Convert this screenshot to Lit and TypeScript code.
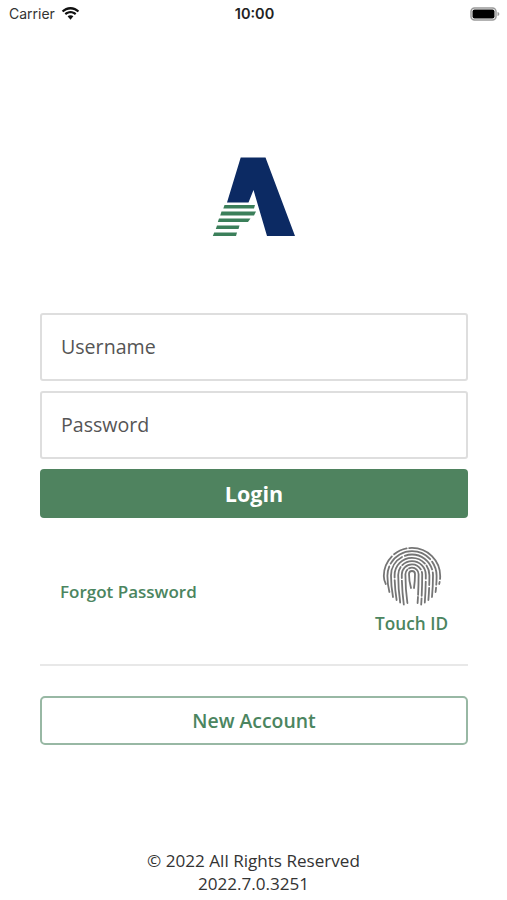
import { LitElement, css, html, svg } from "lit";
import { customElement } from "lit/decorators.js";

// nested ridges of the fingerprint: [half width, top y, bottom y, dash pattern]
const ridges: [number, number, number, string][] = [
  [3, 24, 41, ""],
  [6.600, 20.700, 56, "34 2"],
  [10.200, 17.400, 57.500, "24 2.500 30 2.500"],
  [13.800, 14.100, 55.500, "36 2.500 36 3"],
  [17.400, 10.800, 53, "20 2.500 44 2.500 20 3"],
  [21, 7.500, 50, "44 3 34 3"],
  [24.600, 4.200, 45, "26 3 46 3 24 3"],
  [28.200, 0.900, 37, "30 3 14 2.500 50 3"],
];

@customElement("app-root")
export class AppRoot extends LitElement {
  static styles = css`
    :host {
      display: flex;
      flex-direction: column;
      width: 507px;
      height: 900px;
      background: #fff;
      font-family: "Open Sans", sans-serif;
      color: #4b8560;
    }
    .status {
      display: grid;
      grid-template-columns: 1fr auto 1fr;
      align-items: center;
      height: 27px;
      padding: 0 6px 0 9px;
      font-family: "Inter", "Liberation Sans", sans-serif;
      font-size: 14px;
      color: #333;
    }
    .carrier {
      display: flex;
      align-items: center;
      gap: 6px;
    }
    .time {
      font-weight: 600;
      font-size: 14.500px;
      color: #222;
      margin-left: -1px;
    }
    .battery {
      justify-self: end;
      display: block;
    }
    .logo {
      display: block;
      margin: 130px auto 0;
    }
    .form {
      display: flex;
      flex-direction: column;
      margin: 76px 39px 0 40px;
    }
    .field {
      box-sizing: border-box;
      height: 68px;
      display: flex;
      align-items: center;
      padding: 0 0 1px 19px;
      border: 2px solid #dedede;
      border-radius: 3px;
      font-size: 19.600px;
      color: #555;
      margin-bottom: 10px;
    }
    .login {
      height: 49px;
      display: flex;
      align-items: center;
      justify-content: center;
      border-radius: 4px;
      background: #4f835f;
      color: #fff;
      font-size: 21.500px;
      font-weight: 700;
    }
    .links {
      display: flex;
      justify-content: space-between;
      align-items: center;
      height: 148px;
      padding: 0 20px;
      box-sizing: border-box;
      border-bottom: 2px solid #e8e8e8;
      font-size: 17px;
      font-weight: 600;
    }
    .touch {
      display: flex;
      flex-direction: column;
      align-items: center;
      gap: 5px;
      font-size: 17.200px;
    }
    .touch svg {
      display: block;
    }
    .new-account {
      box-sizing: border-box;
      height: 49px;
      margin-top: 30px;
      display: flex;
      align-items: center;
      justify-content: center;
      border: 2px solid #98b8a4;
      border-radius: 5px;
      font-size: 19.400px;
      font-weight: 600;
    }
    .footer {
      margin-top: 104px;
      text-align: center;
      font-size: 17.100px;
      line-height: 23px;
      color: #333;
    }
  `;

  private fingerprint() {
    return html`<svg width="60" height="60" viewBox="0 0 60 60" fill="none" stroke="#757575" stroke-width="1.800" stroke-linecap="round">
      ${ridges.map(([w, top, bottom, dash]) => {
        const l = 30 - w;
        const r = 30 + w;
        const shoulder = top + w;
        const mid = (shoulder + bottom) / 2;
        const d = `M${l + 2} ${bottom}Q${l} ${mid} ${l} ${shoulder}A${w} ${w} 0 0 1 ${r} ${shoulder}Q${r} ${mid} ${r - 1} ${bottom}`;
        return svg`<path d=${d} stroke-dasharray=${dash || "none"}></path>`;
      })}
    </svg>`;
  }

  render() {
    return html`
      <div class="status">
        <div class="carrier">
          <span>Carrier</span>
          <svg width="19" height="14" viewBox="0 0 19 14" fill="#111">
            <path d="M9.500 2.400c2.800 0 5.300 1.100 7.200 2.900l1.500-1.600C15.900 1.400 12.900 0 9.500 0S3.100 1.400.8 3.700l1.500 1.600c1.900-1.800 4.400-2.900 7.200-2.900z"></path>
            <path d="M9.500 6.300c1.700 0 3.200.6 4.400 1.700l1.500-1.600C13.800 5 11.800 4.100 9.500 4.100S5.200 5 3.600 6.400L5.100 8c1.200-1.100 2.700-1.700 4.400-1.700z"></path>
            <path d="M9.500 8.200c-1.100 0-2.100.4-2.900 1.100l2.900 3.500 2.900-3.500c-.8-.7-1.800-1.100-2.900-1.100z"></path>
          </svg>
        </div>
        <div class="time">10:00</div>
        <svg class="battery" width="31" height="14" viewBox="0 0 31 14">
          <rect x="1" y="1" width="25" height="12" rx="3.500" fill="none" stroke="#999" stroke-width="1.500"></rect>
          <rect x="2.500" y="2.500" width="22" height="9" rx="2" fill="#000"></rect>
          <path d="M27.500 5c1.200.3 1.800 1.100 1.800 2s-.6 1.700-1.800 2z" fill="#999"></path>
        </svg>
      </div>

      <svg class="logo" width="84" height="80" viewBox="213 157 84 80">
        <path d="M241.700 157.500H266.500L296 236H268L254.500 190L249.500 202.500H228Z" fill="#0c2a63"></path>
        <g fill="#3b7f5a">
          <path d="M225.500 205H256L255 208.500H224.300Z"></path>
          <path d="M222.500 211.500H257L255 215.500H221.200Z"></path>
          <path d="M220 218.500H251.500L249 222H218.800Z"></path>
          <path d="M218 225.500H240.500L239.500 229H216.800Z"></path>
          <path d="M215.200 232.500H238L237 236H213.800Z"></path>
        </g>
      </svg>

      <div class="form">
        <div class="field">Username</div>
        <div class="field">Password</div>
        <div class="login">Login</div>
        <div class="links">
          <span>Forgot Password</span>
          <div class="touch">
            ${this.fingerprint()}
            <span>Touch ID</span>
          </div>
        </div>
        <div class="new-account">New Account</div>
      </div>

      <div class="footer">
        <div>© 2022 All Rights Reserved</div>
        <div>2022.7.0.3251</div>
      </div>
    `;
  }
}
